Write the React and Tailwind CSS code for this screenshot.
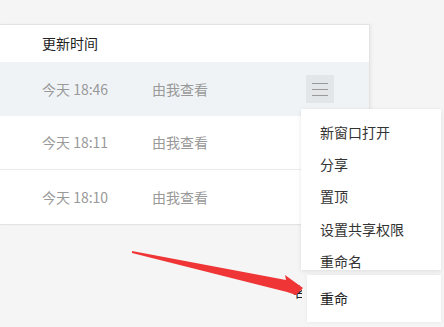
import React from 'react'

const rows = [
  { time: '今天 18:46', who: '由我查看', active: true },
  { time: '今天 18:11', who: '由我查看' },
  { time: '今天 18:10', who: '由我查看' },
]

const menu = ['新窗口打开', '分享', '置顶', '设置共享权限', '重命名']

const font = { fontFamily: '"Noto Sans CJK SC", "Liberation Sans", sans-serif' }

export default function App() {
  return (
    <div className="relative w-[444px] h-[327px] overflow-hidden bg-[#f5f5f5]" style={font}>
      <div className="pt-[24px]">
        <div className="w-[370px] bg-white border-y border-r border-[#e3e3e3] shadow-[2px_0_3px_rgba(0,0,0,0.04)]">
          <div className="h-[37px] flex items-center pl-[42px] text-[14px] text-[#222]">更新时间</div>
          {rows.map((r, i) => (
            <div
              key={i}
              className={`h-[54px] flex items-center pl-[42px] text-[14px] text-[#999] ${r.active ? 'bg-[#eff3f6]' : 'bg-white'} ${i === 1 ? 'border-b border-[#ececec]' : ''}`}
            >
              <span className="w-[110px]">{r.time}</span>
              <span className="w-[154px]">{r.who}</span>
              {r.active && (
                <span className="w-[28px] h-[28px] bg-[#e3e6e8] flex flex-col items-center justify-center gap-[5px]">
                  <span className="block w-[16px] h-px bg-[#9a9a9a]" />
                  <span className="block w-[16px] h-px bg-[#9a9a9a]" />
                  <span className="block w-[16px] h-px bg-[#9a9a9a]" />
                </span>
              )}
            </div>
          ))}
        </div>
      </div>

      <span className="absolute left-[293px] top-[281px] w-[9px] overflow-hidden whitespace-nowrap text-[14px] text-[#222]">名</span>

      <div className="absolute left-[301px] top-[109px] w-[140px] h-[161px] overflow-hidden bg-white shadow-[0_1px_4px_rgba(0,0,0,0.1)] pt-[7px]">
        {menu.map((m) => (
          <div key={m} className="h-[32.3px] flex items-center pl-[19px] text-[14px] text-[#333]">{m}</div>
        ))}
      </div>

      <div className="absolute left-[307px] top-[275px] w-[134px] h-[47px] bg-white shadow-[0_0_4px_rgba(0,0,0,0.06)] flex items-center pl-[13px] text-[14px] text-[#222]">
        重命
      </div>

      <svg className="absolute left-0 top-0" width="444" height="327">
        <polygon
          points="132,251 286,280 285,275 303,288 296,295 287,292 132,253"
          fill="#ef3535"
        />
      </svg>
    </div>
  )
}
